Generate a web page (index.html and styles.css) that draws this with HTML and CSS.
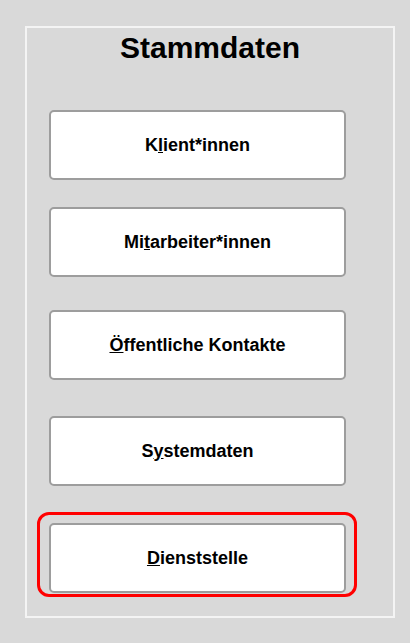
FILE: index.html
```html
<!DOCTYPE html>
<html lang="de">
<head>
    <meta charset="UTF-8">
    <meta name="viewport" content="width=device-width, initial-scale=1.0">
    <title>Stammdaten</title>
    <link rel="stylesheet" href="styles.css">
</head>
<body>
    <div class="panel">
        <h1>Stammdaten</h1>

        <div class="menu">
            <button class="btn">K<u>l</u>ient*innen</button>
            <button class="btn">Mi<u>t</u>arbeiter*innen</button>
            <button class="btn"><u>Ö</u>ffentliche Kontakte</button>
            <button class="btn">S<u>y</u>stemdaten</button>
            <div class="marked">
                <button class="btn"><u>D</u>ienststelle</button>
            </div>
        </div>
    </div>
</body>
</html>
```

FILE: styles.css
```css
body {
    font-family: "Liberation Sans", Arial, sans-serif;
    margin: 0;
    background-color: #d9d9d9;
}
.panel {
    box-sizing: border-box;
    width: 370px;
    height: 592px;
    margin: 26px 0 0 25px;
    padding-top: 3px;
    border: 2px solid #f4f4f4;
}
h1 {
    margin: 0;
    font-size: 30px;
    line-height: 34px;
    color: #000;
    text-align: center;
}
.menu {
    display: flex;
    flex-direction: column;
    align-items: flex-start;
    margin: 45px 0 0 22px;
}
.btn {
    box-sizing: border-box;
    display: block;
    width: 297px;
    height: 70px;
    padding: 0;
    background-color: white;
    border: 2px solid #9d9d9d;
    border-radius: 5px;
    font-family: inherit;
    font-size: 18px;
    font-weight: bold;
    color: #000;
    text-align: center;
    cursor: pointer;
}
.btn:nth-child(2) {
    margin-top: 27px;
}
.btn:nth-child(3) {
    margin-top: 33px;
}
.btn:nth-child(4) {
    margin-top: 36px;
}
.marked {
    position: relative;
    margin-top: 37px;
}
.marked::after {
    content: "";
    position: absolute;
    left: -12px;
    top: -11px;
    right: -11px;
    bottom: -4px;
    border: 3px solid #ff0000;
    border-radius: 12px;
    pointer-events: none;
}
```
